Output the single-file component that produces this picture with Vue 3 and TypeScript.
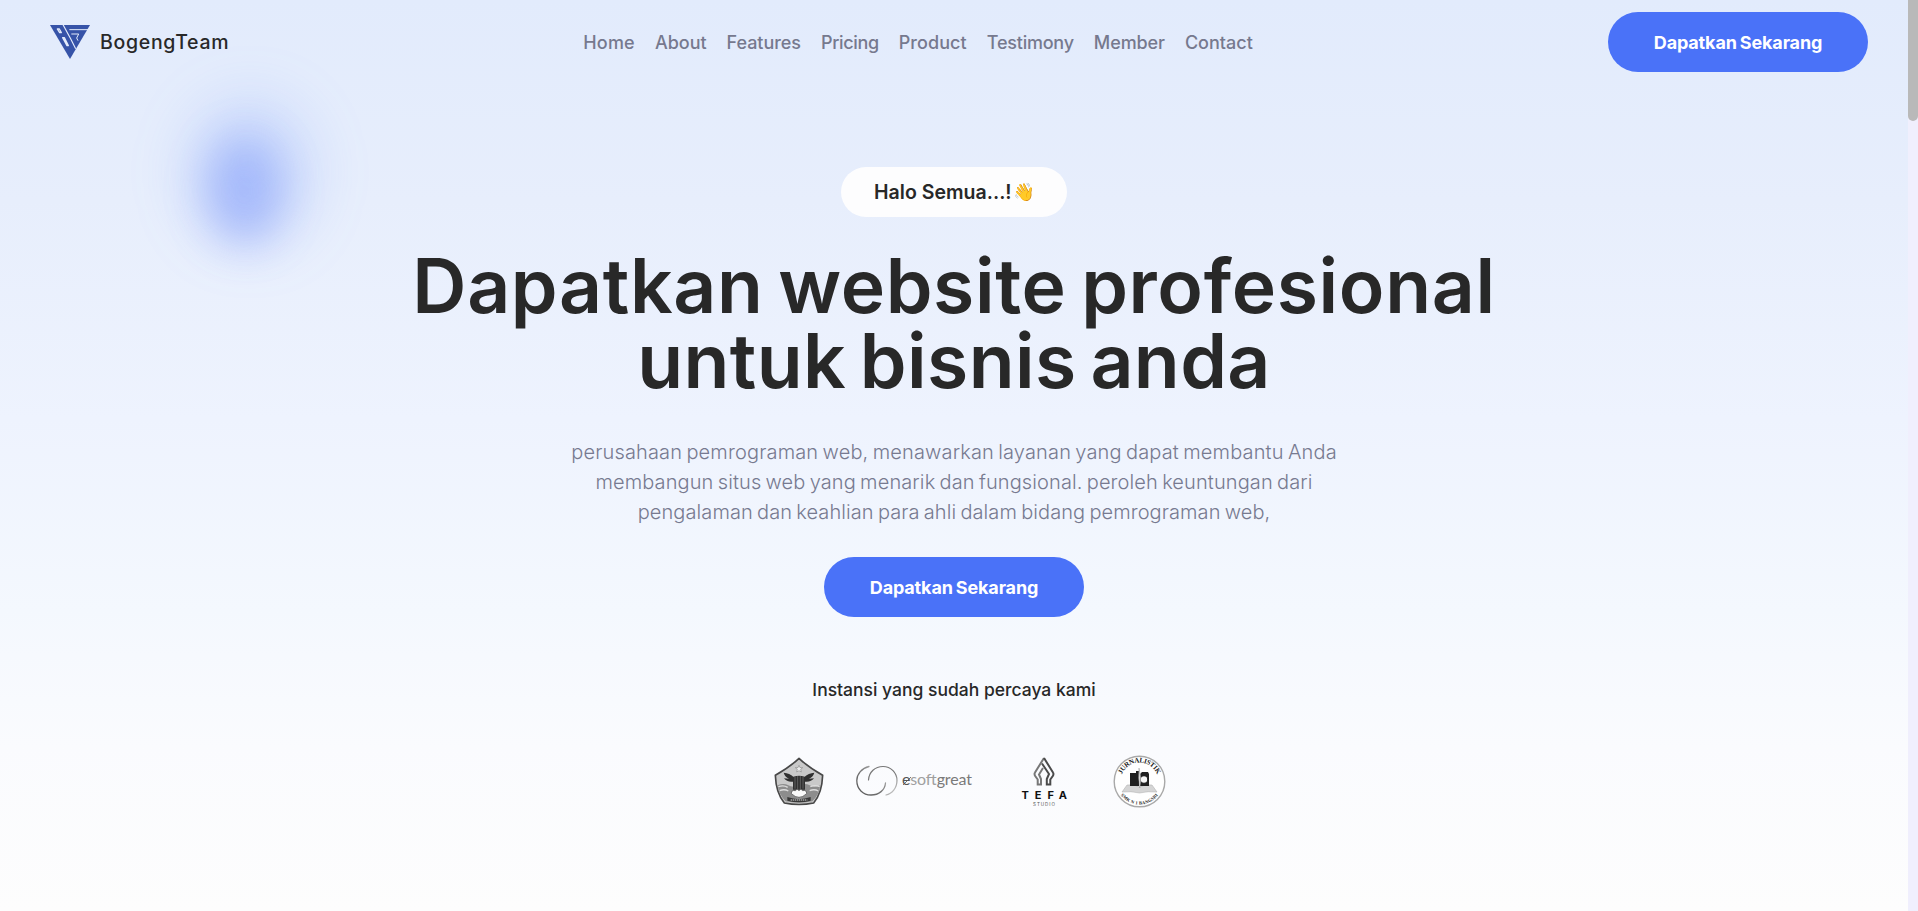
<script setup lang="ts">
const links: string[] = ['Home', 'About', 'Features', 'Pricing', 'Product', 'Testimony', 'Member', 'Contact']
</script>

<template>
  <div class="page">
    <div class="glow glow-wide"></div>
    <div class="glow glow-core"></div>
    <header class="navbar">
      <a class="brand">
        <svg class="brand-mark" viewBox="60 75 120 102" aria-hidden="true">
          <path fill="#3653a8" d="M60 75H180L120 177Z" />
          <g fill="none" stroke="#e3ebfb">
            <path stroke-width="3.500" d="M99 74 117 107l5 9 15 30" />
            <path stroke-width="3" d="M118 89H174M124 102h22l-6 12 4 8" />
            <path stroke-width="4" stroke-linejoin="round" d="M82 87h6l6 11h-5ZM98 113h5l12 24h-4Z" />
          </g>
        </svg>
        <span>BogengTeam</span>
      </a>
      <nav class="links">
        <a v-for="link in links" :key="link">{{ link }}</a>
      </nav>
      <button class="cta">Dapatkan Sekarang</button>
    </header>

    <main class="hero">
      <div class="pill"><span class="hello">Halo Semua...!</span><span class="wave">👋</span></div>
      <h1>
        <span class="title-first">Dapatkan website profesional</span>
        <span class="title-second">untuk bisnis anda</span>
      </h1>
      <p class="lead">
        <span class="lead-first">perusahaan pemrograman web, menawarkan layanan yang dapat membantu Anda</span>
        <span class="lead-second">membangun situs web yang menarik dan fungsional. peroleh keuntungan dari</span>
        <span class="lead-third">pengalaman dan keahlian para ahli dalam bidang pemrograman web,</span>
      </p>
      <button class="cta">Dapatkan Sekarang</button>
      <h2>Instansi yang sudah percaya kami</h2>

      <div class="clients">
        <svg class="crest" viewBox="25 33 150 147">
          <path d="M100 37Q126 62 171 88Q169 142 144 171Q100 180 56 171Q31 142 29 88Q74 62 100 37Z" fill="#c9c9c9" stroke="#484848" stroke-width="5" stroke-linejoin="round" />
          <path d="M36 118q18-8 32 0t32 0 32 0 32 0q-4 30-24 48-40 8-80 0-20-18-24-48Z" fill="#8d8d8d" />
          <path d="M38 122q16-6 28 2M134 122q14-6 28 0M42 134q14-6 26 1M132 134q14-6 26 1" fill="none" stroke="#ddd" stroke-width="4" />
          <path d="m100 58 3 7h8l-6 5 2 8-7-4-7 4 2-8-6-5h8Z" fill="#eee" stroke="#777" stroke-width="1.5" />
          <path d="M54 80q18 1 29 12 17-6 34 0 11-11 29-12-4 13-16 18l15-1q-9 12-27 10v24H82v-24q-18 2-27-10l15 1q-12-5-16-18Z" fill="#303030" />
          <path d="M88 92v36M96 90v40M104 90v40M112 92v36" stroke="#777" stroke-width="2" />
          <path d="M77 143q0-12 12-9 5-9 11 0 6-9 11 0 12-3 12 9-12 11-23 11t-23-11Z" fill="#fafafa" stroke="#444" stroke-width="2" />
          <path d="M65 153q35 13 70 0v11q-35 10-70 0Z" fill="#383838" />
          <path d="M75 162h50" stroke="#ddd" stroke-width="3" stroke-dasharray="4 2" />
        </svg>

        <svg class="esoft" viewBox="0 0 118 36">
          <defs>
            <linearGradient id="ringLeft" x1="1" y1="0" x2="0" y2="1">
              <stop offset="0" stop-color="#ccc" /><stop offset=".5" stop-color="#777" /><stop offset="1" stop-color="#555" />
            </linearGradient>
            <linearGradient id="ringRight" x1="0" y1="0" x2="1" y2="1">
              <stop offset="0" stop-color="#777" /><stop offset=".6" stop-color="#777" /><stop offset="1" stop-color="#ddd" />
            </linearGradient>
          </defs>
          <g fill="none" stroke-linecap="round">
            <path stroke="url(#ringLeft)" stroke-width="1.300" d="M13 3.500C6 5 .8 11 .8 17.500C.8 26 7 32 15 32C23 32 29 27 29.500 20" />
            <path stroke="url(#ringRight)" stroke-width="1.200" d="M12.500 17C13 9 19 3.500 27 3.500C35 3.500 41 10 41 17.500C41 25 36 31 30 32" />
          </g>
          <text class="esoft-text" x="46" y="22" textLength="70"><tspan class="dark">e</tspan><tspan class="pale">soft</tspan><tspan class="mid">great</tspan></text>
          <path d="m47 22 8-8" stroke="#555" stroke-width=".8" />
        </svg>

        <svg class="tefa" viewBox="0 0 48 52">
          <g fill="none" stroke-width="2">
            <path stroke="#777" d="M24 3 15 17.500Q14 19 15.200 21L17.700 24.500V29.500H21V24L19 19.500 23 13" />
            <path stroke="#4a4a4a" d="M24 3 33 17.500Q34 19 32.800 21L30.300 24.500V29.500H26.800V24L29 19 22 8.500" />
          </g>
          <text class="tefa-name" x="1.500" y="43.500" textLength="45.500">TEFA</text>
          <text class="tefa-sub" x="13" y="50.500" textLength="22">STUDIO</text>
        </svg>

        <svg class="press" viewBox="0 0 53 53">
          <defs>
            <path id="arcTop" d="M7.500 26.500a19 19 0 0 1 38 0" />
            <path id="arcBottom" d="M3.500 26.500a23 23 0 0 0 46 0" />
          </defs>
          <circle cx="26.500" cy="26.500" r="25.300" fill="#fff" stroke="#a9a9a9" stroke-width="1.400" />
          <text class="press-top"><textPath href="#arcTop" startOffset="50%" text-anchor="middle" textLength="45">JURNALISTIK</textPath></text>
          <text class="press-bottom"><textPath href="#arcBottom" startOffset="50%" text-anchor="middle" textLength="43">SMK N 1 BANGSRI</textPath></text>
          <path d="M9 37 14 30q7-1 12.500 2Q32 29 39 30l5 7q-9-1-17.500 1Q18 36 9 37Z" fill="#d5d5d5" stroke="#aaa" stroke-width=".5" />
          <path d="M17 18h6v-2h3v15h-9ZM27 19l2-2h6l1 2v12h-9Z" fill="#202020" />
          <circle cx="31" cy="24.500" r="3.800" fill="#f7f7f7" stroke="#202020" stroke-width="1.200" />
          <path d="M26 13q3 9 .8 20-2-10-.8-20Z" fill="#ddd" stroke="#888" stroke-width=".4" />
        </svg>
      </div>
    </main>
    <div class="scrollbar"><div class="thumb"></div></div>
  </div>
</template>

<style>
body {
  margin: 0;
  overflow: hidden;
}
</style>

<style scoped>
.page {
  position: relative;
  box-sizing: border-box;
  height: 911px;
  padding-right: 10px;
  overflow: hidden;
  font-family: Inter, "Liberation Sans", sans-serif;
  color: #282828;
  background: linear-gradient(180deg, #e2ebfc 0%, #e7eefc 22%, #eef3fe 46%, #f4f8fe 67%, #fafbfe 82%, #fdfdfd 100%);
}

.glow {
  position: absolute;
  border-radius: 50%;
}

.glow-wide {
  left: 188px;
  top: 100px;
  width: 124px;
  height: 144px;
  background: rgba(90, 136, 255, 0.2);
  filter: blur(28px);
}

.glow-core {
  left: 206px;
  top: 138px;
  width: 76px;
  height: 106px;
  background: rgba(84, 116, 250, 0.31);
  filter: blur(20px);
}

.navbar {
  position: relative;
  display: grid;
  grid-template-columns: 1fr auto 1fr;
  align-items: center;
  height: 84px;
  padding: 0 40px 0 50px;
}

.brand {
  display: flex;
  align-items: center;
  gap: 10px;
  font-size: 19.500px;
  font-weight: 500;
  letter-spacing: 0.7px;
}

.brand-mark {
  width: 40px;
  height: 34px;
}

.links {
  display: flex;
  gap: 20px;
  margin-right: 82px;
  font-size: 18px;
  font-weight: 500;
  color: #76798e;
}

.links a:nth-child(1) {
  letter-spacing: 0.2px;
}

.links a:nth-child(3) {
  letter-spacing: -0.05px;
}

.links a:nth-child(4) {
  letter-spacing: -0.35px;
}

.links a:nth-child(5) {
  letter-spacing: 0.08px;
}

.links a:nth-child(6) {
  letter-spacing: -0.22px;
}

.links a:nth-child(7) {
  letter-spacing: -0.1px;
}

.cta {
  width: 260px;
  height: 60px;
  padding: 0;
  border: 0;
  border-radius: 30px;
  background: #4a72f8;
  color: #fff;
  font: 700 18px Inter, "Liberation Sans", sans-serif;
  letter-spacing: -0.15px;
  word-spacing: -1px;
}

.navbar .cta {
  justify-self: end;
}

.hero {
  position: relative;
  display: flex;
  flex-direction: column;
  align-items: center;
  padding-top: 83px;
}

.pill {
  box-sizing: border-box;
  display: flex;
  align-items: center;
  width: 226px;
  height: 50px;
  padding-left: 33px;
  border-radius: 25px;
  background: #fdfdfe;
  font-size: 19.500px;
  font-weight: 600;
  letter-spacing: 0.02px;
  white-space: nowrap;
}

.wave {
  margin-left: 1.500px;
  font-size: 17.500px;
  line-height: 22px;
  letter-spacing: 0;
}

h1 {
  margin: 31px 0 0;
  font-size: 75px;
  font-weight: 600;
  line-height: 75px;
  text-align: center;
}

h1 span,
.lead span {
  display: block;
  white-space: nowrap;
}

.title-first {
  letter-spacing: 0.65px;
  word-spacing: -5px;
}

.title-second {
  letter-spacing: 0.4px;
  word-spacing: -5.500px;
}

.lead {
  margin: 38.500px 0 30.500px;
  font-size: 20px;
  font-weight: 300;
  line-height: 30px;
  text-align: center;
  color: #777a90;
}

.lead-first {
  letter-spacing: 0.15px;
  word-spacing: -1.500px;
}

.lead-second {
  letter-spacing: 0.11px;
  word-spacing: -1.500px;
}

.lead-third {
  letter-spacing: 0.08px;
  word-spacing: -1.500px;
}

h2 {
  margin: 60.500px 0 49.500px;
  font-size: 17.500px;
  font-weight: 500;
  line-height: 24px;
}

.clients {
  display: flex;
  align-items: center;
  height: 60px;
  padding-left: 32px;
}

.crest {
  width: 50px;
  height: 49px;
}

.esoft {
  width: 118px;
  height: 36px;
  margin-left: 32px;
}

.tefa {
  width: 48px;
  height: 52px;
  margin-left: 46px;
}

.press {
  width: 53px;
  height: 53px;
  margin-left: 45px;
}

.esoft-text {
  font: 400 16px Lato, sans-serif;
}

.dark {
  fill: #555;
}

.pale {
  fill: #a0a0a0;
}

.mid {
  fill: #7a7a7a;
}

.tefa-name {
  font: 700 11px Inter, sans-serif;
  fill: #111;
}

.tefa-sub {
  font: 400 4.500px Inter, sans-serif;
  fill: #555;
}

.press-top {
  font: 700 7px "Liberation Serif", serif;
  fill: #222;
}

.press-bottom {
  font: 700 4.500px "Liberation Serif", serif;
  fill: #222;
}

.scrollbar {
  position: absolute;
  top: 0;
  right: 0;
  width: 10px;
  height: 100%;
  background: #f0effd;
}

.thumb {
  height: 121px;
  border-radius: 0 0 5px 5px;
  background: #b9b9b9;
}
</style>
